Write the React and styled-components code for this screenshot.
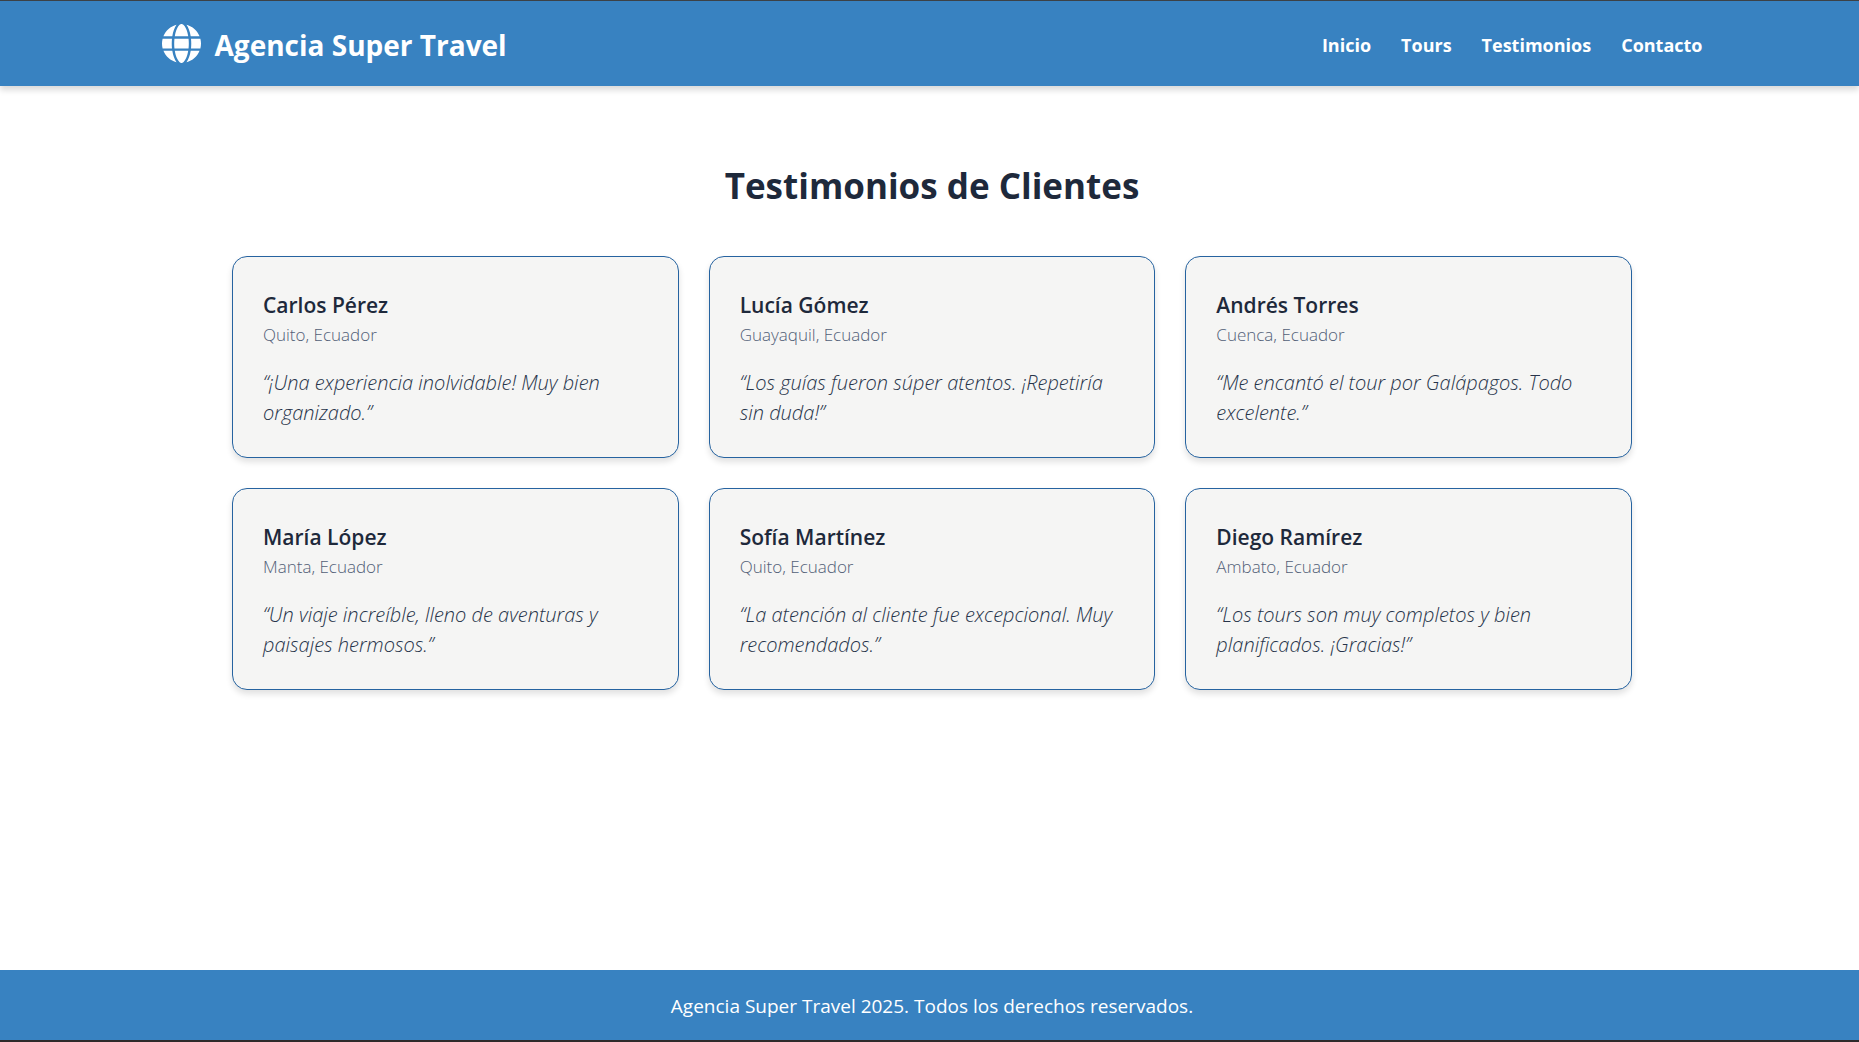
import React from "react";
import styled, { createGlobalStyle } from "styled-components";

const GlobalStyle = createGlobalStyle`
  *, *::before, *::after { box-sizing: border-box; }
  body {
    margin: 0;
    background: #ffffff;
    color: #1e293b;
    font-family: "Segoe UI", "Open Sans", "Noto Sans", sans-serif;
    font-size: 19px;
    line-height: 30px;
  }
  h1, h2, h3, p, ul, blockquote { margin: 0; padding: 0; }
`;

const Page = styled.div`
  display: flex;
  flex-direction: column;
  min-height: 100vh;
  border-top: 1px solid #3d4247;
  border-bottom: 2px solid #2e2a2b;
`;

const Header = styled.header`
  padding: 21px 16px 19px 21px;
  background: #3882c1;
  color: #ffffff;
  box-shadow: 0 4px 6px rgba(0, 0, 0, 0.15);
`;

const HeaderInner = styled.div`
  display: flex;
  align-items: center;
  justify-content: space-between;
  max-width: 1541px;
  min-height: 45px;
  margin: 0 auto;
`;

const Brand = styled.a`
  display: flex;
  align-items: center;
  gap: 14px;
  color: inherit;
  text-decoration: none;
`;

const BrandName = styled.h1`
  font-size: 28px;
  font-weight: 700;
  line-height: 44px;
`;

const GlobeSvg = styled.svg`
  width: 39px;
  height: 39px;
  margin-bottom: 3px;
`;

const NavList = styled.ul`
  display: flex;
  gap: 30px;
  list-style: none;
`;

const NavLink = styled.a`
  color: inherit;
  font-size: 18px;
  font-weight: 700;
  text-decoration: none;
  &:hover { text-decoration: underline; }
`;

const Main = styled.main`
  flex: 1;
  padding: 70px 16px 70px 21px;
`;

const Title = styled.h2`
  margin-bottom: 40px;
  font-size: 35px;
  font-weight: 700;
  line-height: 60px;
  text-align: center;
`;

const Grid = styled.section`
  display: grid;
  grid-template-columns: repeat(auto-fit, minmax(360px, 1fr));
  gap: 30px;
  max-width: 1400px;
  margin: 0 auto;
`;

const Card = styled.article`
  padding: 31px 30px 29px;
  border: 1px solid #2663a0;
  border-radius: 15px;
  background: #f5f5f4;
  box-shadow: 0 4px 6px rgba(0, 0, 0, 0.12);
`;

const Name = styled.h3`
  font-size: 21px;
  font-weight: 600;
  line-height: 35px;
`;

const City = styled.p`
  margin-bottom: 21px;
  color: #526077;
  font-size: 17px;
  font-weight: 350;
  line-height: 24px;
`;

const Quote = styled.blockquote`
  color: #27344a;
  font-size: 20px;
  font-style: italic;
  font-weight: 350;
`;

const Footer = styled.footer`
  padding: 21px 16px 19px 21px;
  background: #3882c1;
  color: #ffffff;
  text-align: center;
`;

const links = ["Inicio", "Tours", "Testimonios", "Contacto"];

const testimonials = [
  { name: "Carlos Pérez", city: "Quito, Ecuador", quote: "¡Una experiencia inolvidable! Muy bien organizado." },
  { name: "Lucía Gómez", city: "Guayaquil, Ecuador", quote: "Los guías fueron súper atentos. ¡Repetiría sin duda!" },
  { name: "Andrés Torres", city: "Cuenca, Ecuador", quote: "Me encantó el tour por Galápagos. Todo excelente." },
  { name: "María López", city: "Manta, Ecuador", quote: "Un viaje increíble, lleno de aventuras y paisajes hermosos." },
  { name: "Sofía Martínez", city: "Quito, Ecuador", quote: "La atención al cliente fue excepcional. Muy recomendados." },
  { name: "Diego Ramírez", city: "Ambato, Ecuador", quote: "Los tours son muy completos y bien planificados. ¡Gracias!" },
];

function Globe() {
  return (
    <GlobeSvg viewBox="0 0 512 512" fill="currentColor" aria-hidden="true">
      <path d="M352 256c0 22.200-1.200 43.600-3.300 64H163.300c-2.200-20.400-3.300-41.800-3.300-64s1.200-43.600 3.300-64h185.400c2.200 20.400 3.300 41.800 3.300 64zm28.800-64h123.100c5.300 20.500 8.100 41.900 8.100 64s-2.800 43.500-8.100 64H380.800c2.100-20.600 3.200-42 3.200-64s-1.100-43.400-3.200-64zm112.600-32H376.700c-10-63.900-29.800-117.400-55.300-151.600 78.300 20.700 142 77.500 171.900 151.600zm-149.100 0H167.700c6.100-36.400 15.500-68.600 27-94.700 10.500-23.600 22.200-40.700 33.500-51.500C239.400 3.200 248.700 0 256 0s16.600 3.200 27.800 13.800c11.300 10.800 23 27.900 33.500 51.500 11.600 26 20.900 58.200 27 94.700zm-209 0H18.600C48.600 85.900 112.200 29.100 190.600 8.400c-25.500 34.200-45.300 87.700-55.300 151.600zM8.100 192h123.100c-2.100 20.600-3.200 42-3.200 64s1.100 43.400 3.200 64H8.100C2.800 299.500 0 278.100 0 256s2.800-43.500 8.100-64zm186.600 254.600c-11.600-26-20.900-58.200-27-94.600h176.600c-6.100 36.400-15.500 68.600-27 94.600-10.500 23.600-22.200 40.700-33.500 51.500C272.600 508.800 263.300 512 256 512s-16.600-3.200-27.800-13.800c-11.300-10.800-23-27.900-33.500-51.600zM135.300 352c10 63.900 29.800 117.400 55.300 151.600C112.200 482.900 48.600 426.100 18.600 352h116.700zm358.100 0c-30 74.100-93.600 130.900-171.900 151.600 25.500-34.200 45.200-87.700 55.300-151.600h116.600z" />
    </GlobeSvg>
  );
}

export default function App() {
  return (
    <>
      <GlobalStyle />
      <Page>
        <Header>
          <HeaderInner>
            <Brand href="#inicio">
              <Globe />
              <BrandName>Agencia Super Travel</BrandName>
            </Brand>
            <nav aria-label="Principal">
              <NavList>
                {links.map((label) => (
                  <li key={label}>
                    <NavLink href={`#${label.toLowerCase()}`}>{label}</NavLink>
                  </li>
                ))}
              </NavList>
            </nav>
          </HeaderInner>
        </Header>
        <Main>
          <Title>Testimonios de Clientes</Title>
          <Grid>
            {testimonials.map((item) => (
              <Card key={item.name}>
                <Name>{item.name}</Name>
                <City>{item.city}</City>
                <Quote>{`“${item.quote}”`}</Quote>
              </Card>
            ))}
          </Grid>
        </Main>
        <Footer>
          <p>Agencia Super Travel 2025. Todos los derechos reservados.</p>
        </Footer>
      </Page>
    </>
  );
}
